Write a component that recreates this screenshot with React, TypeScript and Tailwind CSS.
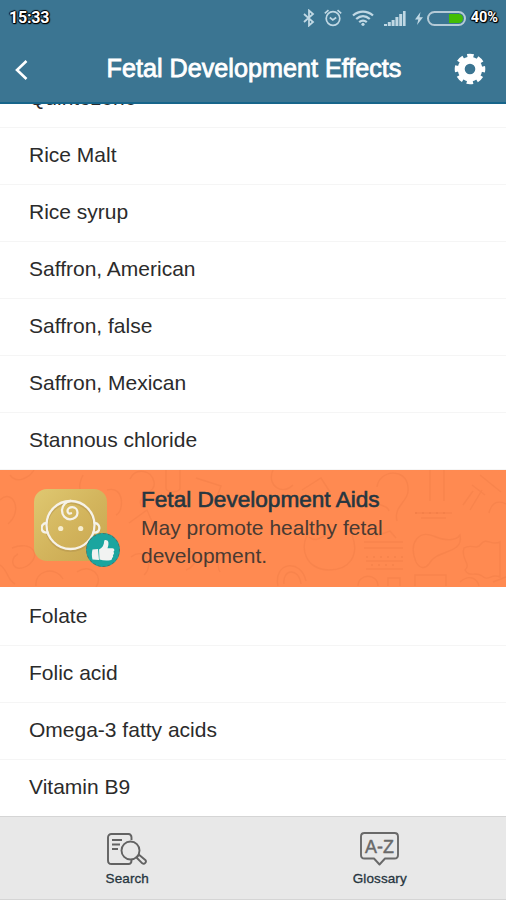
const effects = [
  "Quintozene",
  "Rice Malt",
  "Rice syrup",
  "Saffron, American",
  "Saffron, false",
  "Saffron, Mexican",
  "Stannous chloride",
];

const aids = ["Folate", "Folic acid", "Omega-3 fatty acids", "Vitamin B9"];

const StatusBar = () => (
  <div className="flex h-9 items-center justify-between pl-[9px] pr-2 text-white">
    <span className="font-[Roboto] text-[16px] font-bold tracking-[-0.2px] [text-shadow:1px_0_1px_#000,-1px_0_1px_#000,0_1px_1px_#000,0_-1px_1px_#000,1px_1px_1px_#000]">
      15:33
    </span>
    <div className="flex items-center text-[#c0d8e4]">
      <svg className="h-[18px] w-3" viewBox="0 0 12 18" fill="none" stroke="currentColor" strokeWidth="1.8">
        <path d="M1 5l9 8-4 3.500V1.500L10 5l-9 8" />
      </svg>
      <svg className="ml-[9px] h-[18px] w-[18px]" viewBox="0 0 18 18" fill="none" stroke="currentColor" strokeWidth="1.700">
        <circle cx="9" cy="9.500" r="6.800" />
        <path d="M5.800 8.500l3 2.500 3.400-2.500M.8 4.300L4.500 1.200M17.200 4.300l-3.700-3.100" />
      </svg>
      <svg className="ml-2.5 h-4 w-[22px]" viewBox="0 0 22 16" fill="none" stroke="currentColor" strokeWidth="2.300">
        <path d="M1 5.500c6-5.200 14-5.200 20 0M4.200 9c4.200-3.700 9.400-3.700 13.600 0M7.200 12.200c2.500-2.100 5.100-2.100 7.600 0" />
        <circle cx="11" cy="14.300" r="1.600" fill="currentColor" stroke="none" />
      </svg>
      <svg className="ml-2.5 h-[15px] w-[22px]" viewBox="0 0 22 15" fill="currentColor">
        <path d="M0 13h3v2H0zM3.800 11h3v4h-3zM7.600 9h3v6h-3zM11.400 6h3v9h-3zM15.200 3h3v12h-3zM19 0h2.600v15H19z" />
      </svg>
      <svg className="ml-[9px] h-[13px] w-2" viewBox="0 0 8 13" fill="currentColor">
        <path d="M5.500 0L0 7.500h3.300L2 13l6-7.700H4.500z" />
      </svg>
      <div className="ml-1 flex h-[15px] w-[39px] justify-end rounded-full border-2 border-[#b5cbd7] p-px">
        <div className="w-[14px] rounded-r-full bg-[#43bd05]" />
      </div>
      <span className="ml-[5px] font-[Roboto] text-[14.500px] font-bold text-white [text-shadow:1px_0_1px_#000,-1px_0_1px_#000,0_1px_1px_#000,0_-1px_1px_#000,1px_1px_1px_#000]">
        40%
      </span>
    </div>
  </div>
);

const GearIcon = () => (
  <svg className="h-8 w-8" viewBox="0 0 32 32" fill="none">
    <circle cx="16" cy="16" r="8.800" stroke="white" strokeWidth="7" />
    <circle cx="16" cy="16" r="13" stroke="white" strokeWidth="4.600" strokeDasharray="6.200 4.010" strokeDashoffset="3.100" />
  </svg>
);

const ListRow = ({ name }: { name: string }) => (
  <li className="flex h-[57px] shrink-0 items-center border-b border-[#f5f5f5] pb-0.5 pl-[29px] text-[21px] text-[#2b2b2b]">
    {name}
  </li>
);

const BabyIcon = () => (
  <div className="relative h-[72px] w-[73px] shrink-0 rounded-[13px] bg-linear-to-br from-[#dfc871] via-[#d3b55d] to-[#c8a54f]">
    <svg className="absolute left-[7px] top-2 h-[58px] w-[60px]" viewBox="0 0 60 58" fill="none" strokeLinecap="round">
      <circle cx="29.500" cy="29.500" r="24" stroke="#b1914b" strokeOpacity=".5" strokeWidth="3" />
      <g stroke="#f6f2e8" strokeWidth="2.300">
        <circle cx="29.500" cy="28" r="24" />
        <path d="M5 26c-6 1-6 10 1.500 9.500M54 26c6 1 6 10-1.500 9.500" />
        <path d="M29.500 4c-4.500.5-8.500 4.500-8.500 9.500 0 5 3.500 8.800 8 8.800 4.300 0 7.500-2.800 7.500-6.600 0-3.200-2.300-5.500-5.300-5.500-2.700 0-4.700 1.700-4.700 3.900 0 2 1.800 3 3.500 2.200" />
      </g>
      <g fill="#f6edcf">
        <circle cx="19.700" cy="31.500" r="2.600" />
        <circle cx="39.700" cy="31.500" r="2.600" />
      </g>
    </svg>
    <div className="absolute left-[52px] top-[44px] flex h-[34px] w-[34px] items-center justify-center rounded-full border border-dashed border-[#47766c] bg-[#1ba59f]">
      <svg className="h-[23px] w-[24px]" viewBox="0 0 24 23" fill="#f1f3f2">
        <path d="M1.500 10.500l5.500-.5 1 11-6.500-.5c-.9-3.200-.9-7 0-10z" />
        <path d="M8 10.500c3.500-1.500 5-4.500 5.200-8.500.2-1.500 3.800-1.200 4.200 1.500.2 2-.2 4-.9 5.700h5c2.300.3 2.300 3 .8 3.600 1.200 1 .8 2.800-.5 3.200.8 1 .3 2.500-.8 2.900.3 1.300-.5 2.200-1.800 2.400-4 .5-7.700.2-10.700-.8z" />
      </svg>
    </div>
  </div>
);

const Doodles = () => (
  <svg className="absolute inset-0 h-full w-full" viewBox="0 0 506 117" fill="none" stroke="#dc703e" strokeOpacity=".2" strokeWidth="1.400">
    <path d="M0 30c12-12 24 10 8 24M10 5c7 10 20 2 24-5M83 5c-9 18 3 28 18 20M107 20c18-5 17 22 9 25M12 78c20-8 31 7 15 18-14 8-19-7-9-12M0 95c8 5 7 15 15 19M36 116c-2-15 19-21 27-7M77 102c14-10 27 5 19 15" />
    <path d="M130 9c6-12 22-9 24 3 3 12-20 13-12 25M166 0v18c0 5 14 5 14 0V0M196 8l25 8-8 21M129 53l18-13 9 21M131 87c14-11 24 8 13 18M178 88c15-18 26 5 8 12M220 102c-8-15 14-24 24-10" />
    <path d="M273 0c-7 16 10 26 20 15M302 20l19-12 9 14M309 62c-10 16-4 37 20 38 20 0 31-14 23-35M309 67c10 8 14-6 22 0M278 116c-5-24 23-28 28-5M284 114c-2-15 15-17 17 0" />
    <path d="M377 17c2-17 29-20 31 0 2 15-15 18-11 34M376 29c0 9 11 4 13 12M430 0v31M444 31V0M415 43h37M421 48h25M463 35l10-14M470 40l12-20M480 5l21 17M472 15l13 10" />
    <path d="M364 72h39M364 78h39M366 91h37M366 99h37M376 66l14-5 6 7M416 92c-8-20 3-33 20-25 9 4 20 4 24-2 4 20-24 14-31 29-4 5-9 5-13-2zM464 78c8-5 12 3 17-4 5-7 11 2 19-2v35c-9-4-11 5-18-1-6-5-13 2-17-6 7-6-5-11-1-22z" />
    <path d="M358 116c0-13 20-13 20 0M388 116v-8h12v8M415 116v-11h31v11M460 112c9-8 17-4 19 4M493 112l13-5M489 43c4-17 17-9 17-9" />
    <g strokeDasharray="2 5" strokeWidth="2">
      <path d="M366 87h38M415 43h35M371 95h27" />
    </g>
  </svg>
);

const SearchIcon = () => (
  <svg className="h-8 w-10" viewBox="0 0 40 32" fill="none" stroke="#626262" strokeWidth="1.900" strokeLinejoin="round">
    <path d="M24.500 7V4.500c0-2-1-3.500-3-3.500h-17C2.500 1 1 2.500 1 4.500v23c0 2 1.300 3.500 3.500 3.500h17c2 0 3-1.500 3-3.500v-1.500" />
    <path d="M5 7h10M5 11.500h8M5 16h6" />
    <circle cx="23.500" cy="17.500" r="9" fill="#e8e8e8" />
    <path d="M29.500 24.500l2.500-2.700 6.300 5.200c1.700 1.800-.8 4.800-3 3.300z" fill="#e8e8e8" />
  </svg>
);

const GlossaryIcon = () => (
  <svg className="h-[34px] w-[39px]" viewBox="0 0 39 34" fill="none" stroke="#696969" strokeWidth="1.900" strokeLinejoin="round">
    <path d="M4.500 1h30C36.700 1 38 2.300 38 4.500V23c0 2.200-1.300 3.500-3.500 3.500H25l-5.500 6-5.500-6H4.500C2.300 26.500 1 25.200 1 23V4.500C1 2.300 2.300 1 4.500 1z" />
    <text x="19.500" y="20.500" textAnchor="middle" textLength="29" lengthAdjust="spacingAndGlyphs" fontSize="19" fill="#696969" strokeWidth=".5">
      A-Z
    </text>
  </svg>
);

const App = () => {
  return (
    <div className="flex h-[900px] w-[506px] flex-col overflow-hidden bg-white font-['Liberation_Sans',Arial,sans-serif]">
      <header className="relative z-10 h-[104px] shrink-0 border-b-2 border-[#17658a] bg-[#3b7592]">
        <StatusBar />
        <div className="flex h-[66px] items-center justify-between pl-[15px] pr-5 text-white">
          <svg className="mt-0.5 h-5 w-[13px]" viewBox="0 0 13 20" fill="none" stroke="currentColor" strokeWidth="2.600">
            <path d="M11.500 1L2 10l9.500 9" />
          </svg>
          <h1 className="ml-[26px] text-[25.200px] [-webkit-text-stroke:0.8px_white]">Fetal Development Effects</h1>
          <GearIcon />
        </div>
      </header>

      <main className="flex min-h-0 flex-1 flex-col">
        {/* list is scrolled, the first row slides under the header */}
        <ul className="-mt-[33px] h-[399px] shrink-0">
          {effects.map((name) => (
            <ListRow key={name} name={name} />
          ))}
        </ul>

        <section className="relative flex h-[117px] shrink-0 items-start bg-[#ff8a51] pl-[34px] pt-[19px]">
          <Doodles />
          <BabyIcon />
          <div className="relative -mt-[3px] ml-[34px] w-[260px]">
            <h2 className="text-[22.600px] leading-7 text-[#263640] [-webkit-text-stroke:0.600px_#263640]">Fetal Development Aids</h2>
            <p className="text-[21px] leading-7 text-[#4a3a32]">May promote healthy fetal development.</p>
          </div>
        </section>

        <ul className="mt-0.5">
          {aids.map((name) => (
            <ListRow key={name} name={name} />
          ))}
        </ul>
      </main>

      <nav className="relative flex h-[84px] shrink-0 border-y border-[#d5d5d5] bg-[#e8e8e8] text-[13.500px] tracking-[0.1px] text-[#26353e]">
        <button className="flex flex-1 flex-col items-center pl-px pt-4">
          <SearchIcon />
          <span className="mt-1 [-webkit-text-stroke:0.3px_#26353e]">Search</span>
        </button>
        <button className="flex flex-1 flex-col items-center pt-[15px]">
          <GlossaryIcon />
          <span className="mt-[3px] [-webkit-text-stroke:0.3px_#26353e]">Glossary</span>
        </button>
      </nav>
    </div>
  );
};

export default App;
